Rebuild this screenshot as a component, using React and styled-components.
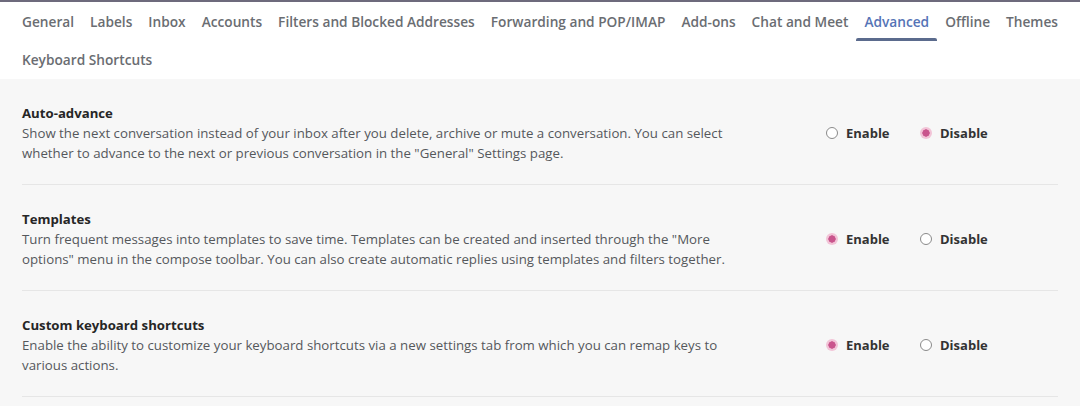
import React from "react";
import styled, { createGlobalStyle } from "styled-components";

const Global = createGlobalStyle`
  html, body { margin: 0; padding: 0; background: #f7f7f7; }
  body { font-family: "Open Sans", "Liberation Sans", Arial, sans-serif; -webkit-font-smoothing: antialiased; }
`;

const Page = styled.div`
  width: 1080px;
  height: 406px;
  overflow: hidden;
  background: #f7f7f7;
`;

const TabBar = styled.nav`
  display: flex;
  flex-wrap: wrap;
  background: #ffffff;
  border-top: 2px solid #6d6a7c;
  padding: 0 14px;
`;

const Tab = styled.div`
  position: relative;
  height: 38.5px;
  padding: 0 8px;
  display: flex;
  align-items: center;
  font-size: 13.7px;
  font-weight: 600;
  color: ${(p) => (p.$active ? "#5574b6" : "#6a6d72")};
  white-space: nowrap;
  &::after {
    content: "";
    display: ${(p) => (p.$active ? "block" : "none")};
    position: absolute;
    left: 0;
    right: 0;
    bottom: 0;
    height: 3px;
    border-radius: 2px 2px 0 0;
    background: #5b6b8d;
  }
`;

const Content = styled.div`
  padding: 0 22px;
`;

const Section = styled.div`
  display: flex;
  align-items: flex-start;
  padding: 24px 0 21px;
  border-bottom: 1px solid #e6e6e6;
`;

const TextCol = styled.div`
  width: 725px;
  flex: 0 0 725px;
`;

const Title = styled.div`
  font-size: 13.2px;
  font-weight: 700;
  line-height: 20px;
  color: #262626;
`;

const Desc = styled.div`
  font-size: 13.27px;
  line-height: 20px;
  color: #55585c;
`;

const Controls = styled.div`
  display: flex;
  align-items: center;
  margin-left: 79px;
  margin-top: 20px;
  height: 20px;
`;

const Option = styled.label`
  display: flex;
  align-items: center;
  gap: 8px;
  min-width: 94px;
  font-size: 13px;
  font-weight: 700;
  color: #333;
`;

const Radio = styled.span`
  box-sizing: border-box;
  width: 12px;
  height: 12px;
  border-radius: 50%;
  flex: 0 0 12px;
  ${(p) =>
    p.$checked
      ? `background: radial-gradient(circle, #c9558d 0 3.4px, #f2c4d7 3.9px);`
      : `border: 1.2px solid #8a8a8a; background: #fff;`}
`;

const tabs = [
  "General",
  "Labels",
  "Inbox",
  "Accounts",
  "Filters and Blocked Addresses",
  "Forwarding and POP/IMAP",
  "Add-ons",
  "Chat and Meet",
  "Advanced",
  "Offline",
  "Themes",
  "Keyboard Shortcuts",
];

const settings = [
  {
    title: "Auto-advance",
    desc: 'Show the next conversation instead of your inbox after you delete, archive or mute a conversation. You can select whether to advance to the next or previous conversation in the "General" Settings page.',
    enabled: false,
  },
  {
    title: "Templates",
    desc: 'Turn frequent messages into templates to save time. Templates can be created and inserted through the "More options" menu in the compose toolbar. You can also create automatic replies using templates and filters together.',
    enabled: true,
  },
  {
    title: "Custom keyboard shortcuts",
    desc: "Enable the ability to customize your keyboard shortcuts via a new settings tab from which you can remap keys to various actions.",
    enabled: true,
  },
];

export default function App() {
  return (
    <Page>
      <Global />
      <TabBar>
        {tabs.map((t) => (
          <Tab key={t} $active={t === "Advanced"}>
            {t}
          </Tab>
        ))}
      </TabBar>
      <Content>
        {settings.map((s) => (
          <Section key={s.title}>
            <TextCol>
              <Title>{s.title}</Title>
              <Desc>{s.desc}</Desc>
            </TextCol>
            <Controls>
              <Option>
                <Radio $checked={s.enabled} />
                Enable
              </Option>
              <Option>
                <Radio $checked={!s.enabled} />
                Disable
              </Option>
            </Controls>
          </Section>
        ))}
      </Content>
    </Page>
  );
}
